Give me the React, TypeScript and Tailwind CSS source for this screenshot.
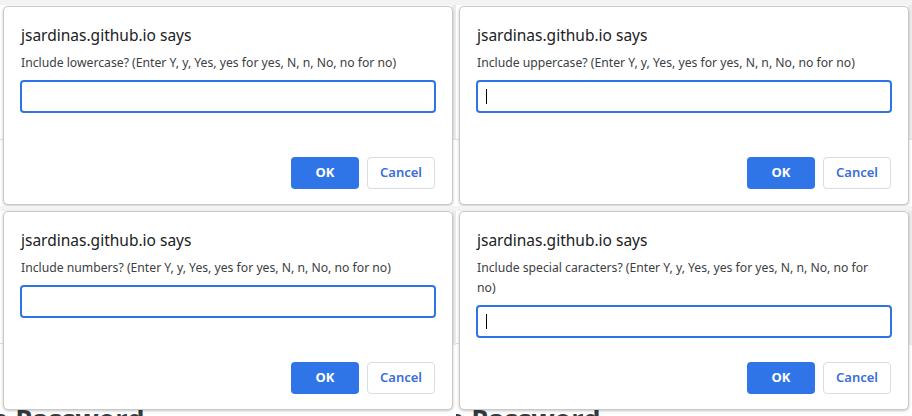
const SITE = 'jsardinas.github.io says'
const HINT = '(Enter Y, y, Yes, yes for yes, N, n, No, no for no)'

type Prompt = {
  question: string
  caret?: boolean
  bottom?: boolean
}

const prompts: Prompt[] = [
  { question: 'Include lowercase?' },
  { question: 'Include uppercase?', caret: true },
  { question: 'Include numbers?', bottom: true },
  { question: 'Include special caracters?', caret: true, bottom: true },
]

function PromptCell({ question, caret, bottom }: Prompt) {
  return (
    <div className={`relative overflow-hidden bg-white ${bottom ? 'h-[210px] pt-[5px]' : 'h-[206px] pt-[6px]'}`}>
      {/* page behind the dialog */}
      <div className="absolute inset-x-0 top-0 h-[5px] bg-[#f1f3f4]" />
      <div className={`absolute inset-x-0 h-px bg-[#e2e2e2] ${bottom ? 'top-[137px]' : 'top-[139px]'}`} />
      <div className="absolute right-0 top-[5px] h-[134px] w-[4px] bg-[#ececec]" />
      <div className={`absolute left-0 w-[160px] overflow-hidden ${bottom ? 'top-[199px] h-[11px]' : 'top-[203px] h-[3px]'}`}>
        <div
          className="ml-[-8px] whitespace-nowrap text-[27px] font-bold leading-none text-[#343a40]"
          style={{ fontFamily: '"Open Sans", "Noto Sans", sans-serif' }}
        >
          a Password
        </div>
      </div>

      <div
        className="relative ml-[3px] flex h-[199px] w-[450px] flex-col rounded-[5px] border border-[#c9c9c9] bg-white px-4 pb-[15px] pt-[18px] shadow-[0_1px_3px_rgba(0,0,0,0.22)]"
        style={{ fontFamily: '"Segoe UI", "Noto Sans", sans-serif' }}
      >
        <p className="pl-px text-[15.5px] leading-[20px] text-[#202124]">{SITE}</p>
        <p className="mt-[8px] max-w-[400px] pl-px text-[12.2px] leading-[20px] text-[#3c4043]">
          {question} {HINT}
        </p>
        <div className="mt-[7px] flex h-[33px] items-center rounded-[4px] border-2 border-[#2f74e6] px-2">
          {caret && <span className="h-[15px] w-px bg-black" />}
        </div>
        <div className="mt-auto mr-px flex justify-end gap-2">
          <button className="h-8 w-[68px] rounded-[4px] bg-[#2f75e8] text-[13px] font-bold text-white">OK</button>
          <button className="h-8 w-[68px] rounded-[4px] border border-[#dadce0] bg-white text-[13px] font-semibold text-[#3a6fd8]">
            Cancel
          </button>
        </div>
      </div>
    </div>
  )
}

export default function App() {
  return (
    <div className="grid h-[416px] w-[912px] grid-cols-2 overflow-hidden bg-white">
      {prompts.map((p) => (
        <PromptCell key={p.question} {...p} />
      ))}
    </div>
  )
}
